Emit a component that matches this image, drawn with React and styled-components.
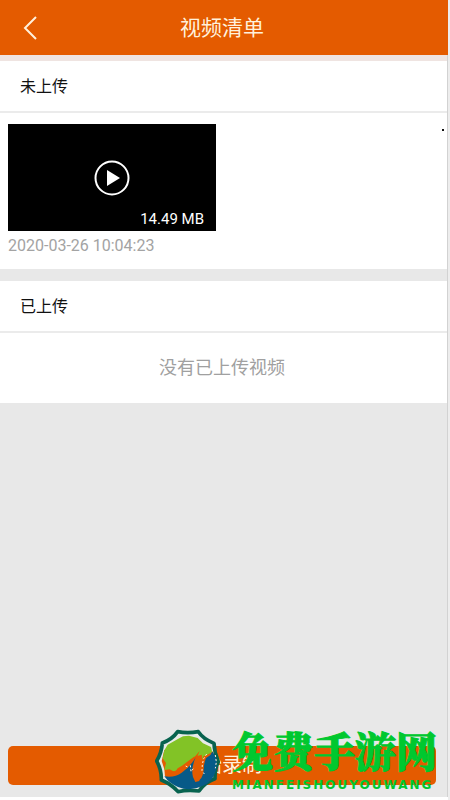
import React from "react";
import styled, { createGlobalStyle } from "styled-components";

const Global = createGlobalStyle`
  * { box-sizing: border-box; }
  body { margin: 0; background: #fff; font-family: Roboto, "Noto Sans CJK SC", sans-serif; }
  button { font: inherit; border: 0; padding: 0; cursor: pointer; }
`;

const Screen = styled.div`
  display: flex;
  flex-direction: column;
  min-height: 100vh;
  padding-right: 2px;
  padding-bottom: 3px;
  background: linear-gradient(to left, #ededed 2px, #fff 2px);
`;

const Page = styled.main`
  flex: 1;
  display: flex;
  flex-direction: column;
  background: #e8e8e8;
  border-right: 1px solid #d2d2d2;
`;

const Header = styled.header`
  display: grid;
  grid-template-columns: 60px 1fr 60px;
  align-items: center;
  height: 55px;
  margin-right: -1px;
  padding-right: 4px;
  background: #e45b00;
  color: #fff1dc;
`;

const BackButton = styled.button`
  display: grid;
  place-items: center;
  height: 54px;
  background: none;
  color: inherit;
`;

const Title = styled.h1`
  margin: 0;
  text-align: center;
  font-size: 21px;
  line-height: 54px;
  font-weight: 400;
`;

const Sections = styled.div`
  display: flex;
  flex-direction: column;
  gap: 12px;
  border-top: 6px solid #efe4e1;
`;

const Section = styled.section`
  background: #fff;
`;

const SectionTitle = styled.h2`
  margin: 0;
  padding: 2px 20px 0;
  border-bottom: 2px solid #ebebeb;
  font-size: 16px;
  line-height: 48px;
  font-weight: 400;
  color: #111;
`;

const VideoRow = styled.div`
  display: flex;
  justify-content: space-between;
  padding: 11px 3px 8px 8px;
`;

const Video = styled.figure`
  margin: 0;
`;

const Thumb = styled.button`
  position: relative;
  display: grid;
  place-items: center;
  width: 208px;
  height: 107px;
  background: #000;
  color: #fff;
`;

const Size = styled.span`
  position: absolute;
  right: 12px;
  bottom: 3px;
  font-size: 15px;
  line-height: 18px;
`;

const Stamp = styled.figcaption`
  color: #a3a3a3;
  font-size: 16px;
  line-height: 30px;
`;

const Dot = styled.span`
  width: 2px;
  height: 2px;
  margin-top: 5px;
  background: #111;
`;

const Empty = styled.p`
  margin: 0;
  padding-right: 3px;
  text-align: center;
  font-size: 18px;
  line-height: 70px;
  color: #a0a0a0;
`;

const Footer = styled.footer`
  position: relative;
  margin-top: auto;
  padding: 0 11px 12px 8px;
`;

const Record = styled.button`
  display: block;
  width: 100%;
  height: 39px;
  border-radius: 5px;
  background: #e45b00;
  color: #fff1dc;
  font-size: 20px;
  line-height: 39px;
`;

const Watermark = styled.div`
  position: absolute;
  right: 10px;
  bottom: 3px;
  display: flex;
  gap: 12px;
  align-items: flex-end;
  pointer-events: none;
`;

const Brand = styled.div`
  display: flex;
  flex-direction: column;
  color: #00c82f;
`;

const BrandName = styled.span`
  font-family: "Noto Serif CJK SC", "Noto Sans CJK SC", serif;
  font-size: 41px;
  line-height: 52px;
  font-weight: 900;
  -webkit-text-stroke: 1px currentColor;
`;

const BrandLatin = styled.span`
  font-family: "DejaVu Sans", sans-serif;
  font-size: 12px;
  line-height: 18px;
  font-weight: 700;
  letter-spacing: 2px;
`;

function Emblem() {
  return (
    <svg width="65" height="65" viewBox="6 9 195 195" aria-hidden="true">
      <path
        d="M74 17Q104 23 136 17Q150 38 183 52Q184 80 196 107Q185 130 186 158Q156 168 138 195Q105 190 75 197Q55 174 25 162Q26 132 11 105Q26 80 28 51Q58 40 74 17Z"
        fill="#e8ebe8" stroke="#08634f" strokeWidth="11" strokeLinejoin="round"
      />
      <path d="M34 72L26 105L34 130L36 151L73 180L108 184L145 178L178 151L188 117L180 77L145 65Z" fill="#e45b00" />
      <path d="M44 56L76 38L90 31L108 29L134 36L150 52L174 63L178 79L159 90L148 103L146 86L122 93L87 119L74 127L66 139L50 130L34 132L39 111L29 97L34 73Z" fill="#82c326" />
      <path d="M51 139Q98 130 140 75Q129 101 122 115L112 146L92 158L63 151Z" fill="#e45b00" />
      <path d="M34 151Q65 156 86 140Q113 121 128 94Q113 129 120 153L127 168L139 165Q140 124 158 97Q170 90 178 77Q197 99 189 132Q180 168 148 180Q111 198 75 183Q48 172 34 151Z" fill="#075a88" />
      <path d="M151 91Q170 84 177 78Q164 109 151 139Q148 158 135 165Q142 123 151 91Z" fill="#e45b00" />
      <path d="M159 96Q174 88 178 78Q193 102 186 126Q177 151 155 156Q147 128 159 96Z" fill="#075a88" />
      <path d="M98 120L108 125M112 118L114 137L123 125M161 84L152 98L148 115L147 134L154 144M187 87L190 108L187 127" fill="none" stroke="#fff1dc" strokeWidth="3" strokeDasharray="6 6" />
    </svg>
  );
}

export default function App() {
  return (
    <>
      <Global />
      <Screen>
        <Page>
          <Header>
            <BackButton aria-label="返回">
              <svg width="16" height="26" viewBox="0 0 16 26" fill="none" stroke="currentColor" strokeWidth="2" aria-hidden="true">
                <path d="M14 2L3 13L14 24" />
              </svg>
            </BackButton>
            <Title>视频清单</Title>
          </Header>
          <Sections>
            <Section>
              <SectionTitle>未上传</SectionTitle>
              <VideoRow>
                <Video>
                  <Thumb aria-label="播放视频 14.49 MB">
                    <svg width="36" height="36" viewBox="0 0 36 36" aria-hidden="true">
                      <circle cx="18" cy="18" r="16.5" fill="none" stroke="currentColor" strokeWidth="2" />
                      <path d="M13 10L26 18L13 26Z" fill="currentColor" />
                    </svg>
                    <Size>14.49 MB</Size>
                  </Thumb>
                  <Stamp>2020-03-26 10:04:23</Stamp>
                </Video>
                <Dot />
              </VideoRow>
            </Section>
            <Section>
              <SectionTitle>已上传</SectionTitle>
              <Empty>没有已上传视频</Empty>
            </Section>
          </Sections>
          <Footer>
            <Record>开始录制</Record>
            <Watermark>
              <Emblem />
              <Brand>
                <BrandName>免费手游网</BrandName>
                <BrandLatin>MIANFEISHOUYOUWANG</BrandLatin>
              </Brand>
            </Watermark>
          </Footer>
        </Page>
      </Screen>
    </>
  );
}
